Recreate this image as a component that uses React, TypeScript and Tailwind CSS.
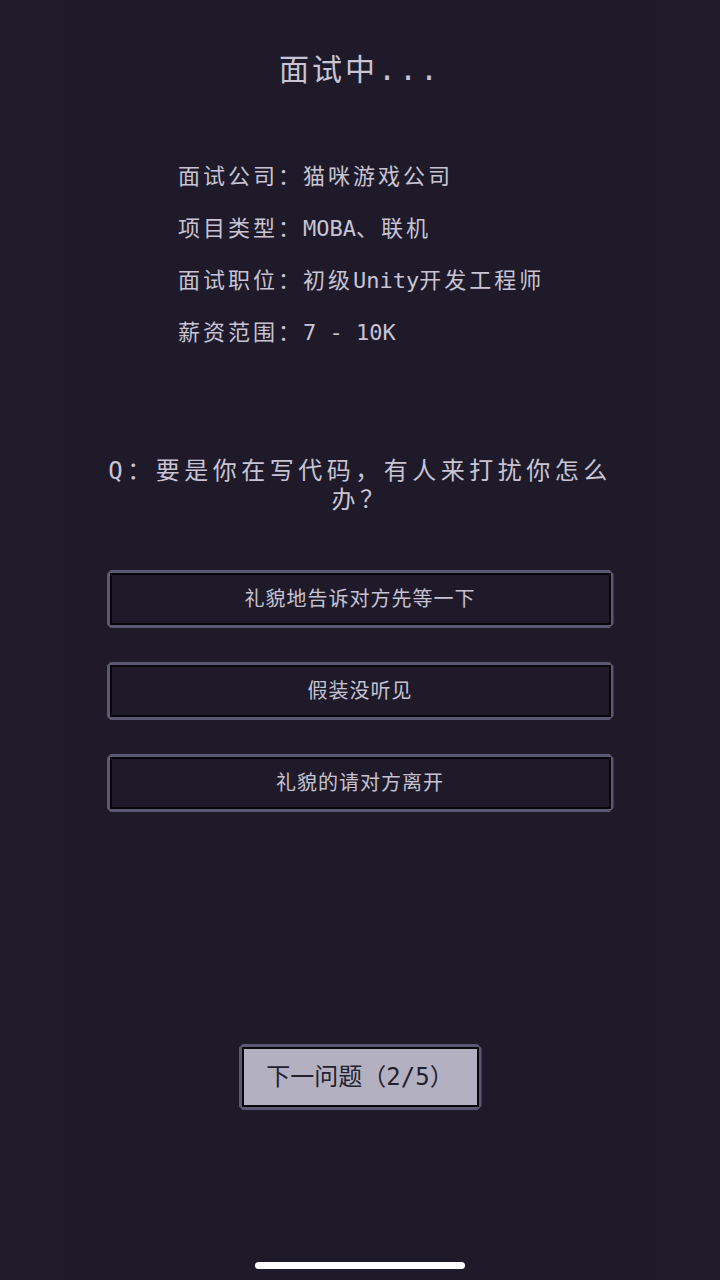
const font = { fontFamily: '"DejaVu Sans Mono", "Noto Sans CJK SC", monospace' }

const L = ({ children }: { children: React.ReactNode }) => (
  <span className="tracking-[0px]">{children}</span>
)

const info: [string, React.ReactNode][] = [
  ['面试公司', '猫咪游戏公司'],
  ['项目类型', <><L>MOBA</L>、联机</>],
  ['面试职位', <>初级<L>Unity</L>开发工程师</>],
  ['薪资范围', <L>7 - 10K</L>],
]

const options = ['礼貌地告诉对方先等一下', '假装没听见', '礼貌的请对方离开']

function PixelButton({
  children,
  light,
  className,
}: {
  children: React.ReactNode
  light?: boolean
  className?: string
}) {
  return (
    <div
      className={`bg-[#5b5873] p-[3px] [clip-path:polygon(4px_0,calc(100%-4px)_0,100%_4px,100%_calc(100%-4px),calc(100%-4px)_100%,4px_100%,0_calc(100%-4px),0_4px)] ${className ?? ''}`}
    >
      <div
        className={`flex h-full items-center justify-center border-2 border-[#07060b] ${
          light ? 'bg-[#b3b0c2] text-[#24212f]' : 'bg-[#1e1a2a] text-[#c6c2d2]'
        }`}
      >
        {children}
      </div>
    </div>
  )
}

export default function App() {
  return (
    <div className="flex min-h-[1280px] justify-center bg-[#211a2a]" style={font}>
      <div className="relative flex h-[1280px] w-[590px] flex-col items-center bg-[#1e1a2a]">
        <h1 className="mt-[50px] text-[30px] leading-[40px] tracking-[3px] text-[#c8c4d4]">面试中...</h1>

        <div className="mt-[61px] w-full pl-[113px] text-[22px] tracking-[3px] text-[#c8c4d4]">
          {info.map(([k, v]) => (
            <div key={k} className="leading-[52px]">
              {k}：{v}
            </div>
          ))}
        </div>

        <p className="mt-[98px] w-[526px] text-center text-[24px] leading-[29px] tracking-[4.5px] text-[#c8c4d4]">
          Q：要是你在写代码，有人来打扰你怎么办？
        </p>

        <div className="mt-[55px] flex w-[507px] flex-col gap-[34px]">
          {options.map((o) => (
            <PixelButton key={o} className="h-[58px]">
              <span className="text-[20px] tracking-[1px]">{o}</span>
            </PixelButton>
          ))}
        </div>

        <PixelButton light className="mt-[232px] h-[66px] w-[243px]">
          <span className="text-[24px]">下一问题（2/5）</span>
        </PixelButton>

        <div className="absolute bottom-[11px] left-1/2 h-[7px] w-[210px] -translate-x-1/2 rounded-full bg-white" />
      </div>
    </div>
  )
}
